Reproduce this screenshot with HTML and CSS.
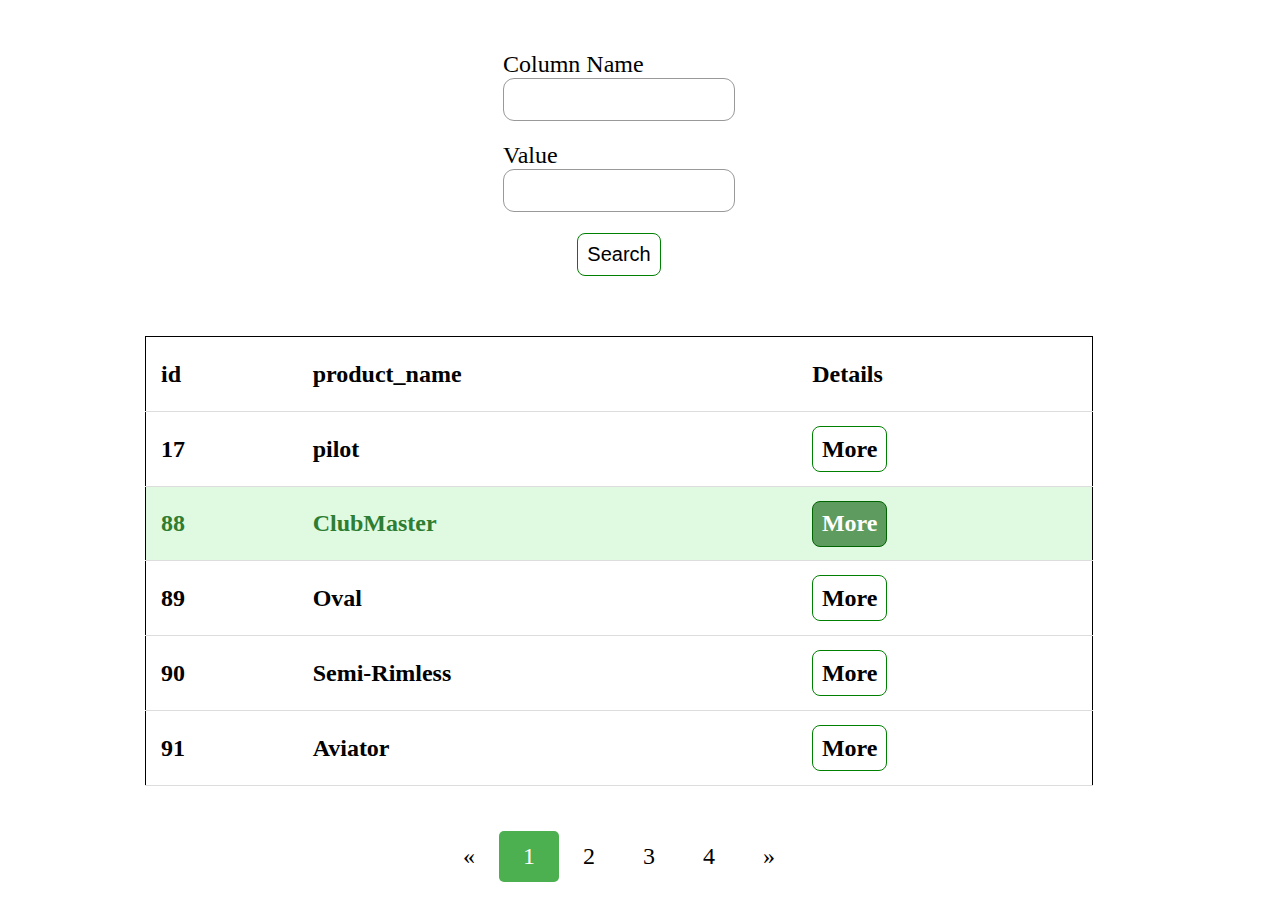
FILE: index.html
```html
<!DOCTYPE html>
<html>
<head>
<meta charset="utf-8">
<link rel="stylesheet" href="styles.css">
</head>
<body>
<div class="page">
  <form class="search-form">
    <div class="field">
      <label class="field-label">Column Name</label>
      <input class="field-input" type="text">
    </div>
    <div class="field">
      <label class="field-label">Value</label>
      <input class="field-input" type="text">
    </div>
    <button class="search-btn" type="button">Search</button>
  </form>

  <table class="products">
    <thead>
      <tr><th class="c-id">id</th><th class="c-name">product_name</th><th class="c-det">Details</th></tr>
    </thead>
    <tbody>
      <tr><td>17</td><td>pilot</td><td><button class="more-btn">More</button></td></tr>
      <tr class="hovered"><td>88</td><td>ClubMaster</td><td><button class="more-btn">More</button></td></tr>
      <tr><td>89</td><td>Oval</td><td><button class="more-btn">More</button></td></tr>
      <tr><td>90</td><td>Semi-Rimless</td><td><button class="more-btn">More</button></td></tr>
      <tr><td>91</td><td>Aviator</td><td><button class="more-btn">More</button></td></tr>
    </tbody>
  </table>

  <div class="pagination">
    <a class="page-link">&laquo;</a>
    <a class="page-link active">1</a>
    <a class="page-link">2</a>
    <a class="page-link">3</a>
    <a class="page-link">4</a>
    <a class="page-link">&raquo;</a>
  </div>
</div>
</body>
</html>
```
FILE: styles.css
```css
html, body {
  margin: 0;
  padding: 0;
  background: #fff;
}
body {
  font-family: "Liberation Serif", "Times New Roman", serif;
  color: #000;
}
.page {
  width: 1238px;
  display: flex;
  flex-direction: column;
  align-items: center;
  padding-top: 50px;
}
.search-form {
  display: flex;
  flex-direction: column;
  align-items: center;
  width: 232px;
}
.field {
  display: flex;
  flex-direction: column;
  width: 232px;
  margin-bottom: 20px;
}
.field + .field { margin-bottom: 21px; }
.field-label {
  font-size: 24px;
  line-height: 28px;
}
.field-input {
  box-sizing: border-box;
  width: 232px;
  height: 43px;
  border: 1px solid #999;
  border-radius: 11px;
  margin: 0;
  padding: 0 10px;
  font-size: 18px;
  background: #fff;
}
.search-btn {
  box-sizing: border-box;
  height: 43px;
  width: 84px;
  border: 1px solid #008000;
  border-radius: 8px;
  background: #fff;
  font-family: "Liberation Sans", Arial, sans-serif;
  font-size: 20px;
  color: #000;
  padding: 0;
}
.products {
  margin-top: 60px;
  width: 948px;
  border-collapse: collapse;
  border: 1px solid #000;
  border-bottom: none;
  table-layout: fixed;
}
.products th, .products td {
  height: 75px;
  box-sizing: border-box;
  padding: 0 15px;
  text-align: left;
  font-weight: bold;
  font-size: 24px;
  border-bottom: 1px solid #ddd;
  vertical-align: middle;
}
.c-id { width: 152px; }
.c-name { width: 499px; }
.c-det { width: 295px; }
.more-btn {
  box-sizing: border-box;
  width: 75px;
  height: 46px;
  border: 1px solid #008000;
  border-radius: 8px;
  background: #fff;
  font-family: "Liberation Serif", "Times New Roman", serif;
  font-weight: bold;
  font-size: 24px;
  color: #000;
  padding: 0;
  display: block;
}
.products .hovered td {
  height: 74px;
  background: #e0fae1;
  color: #2e7d32;
}
.hovered .more-btn {
  background: #5e9b5e;
  border-color: #006400;
  color: #fff;
}
.pagination {
  display: flex;
  margin-top: 45px;
}
.page-link {
  width: 60px;
  height: 51px;
  display: flex;
  align-items: center;
  justify-content: center;
  font-size: 24px;
  color: #000;
  border-radius: 5px;
}
.page-link.active {
  background: #4caf50;
  color: #fff;
}
```
